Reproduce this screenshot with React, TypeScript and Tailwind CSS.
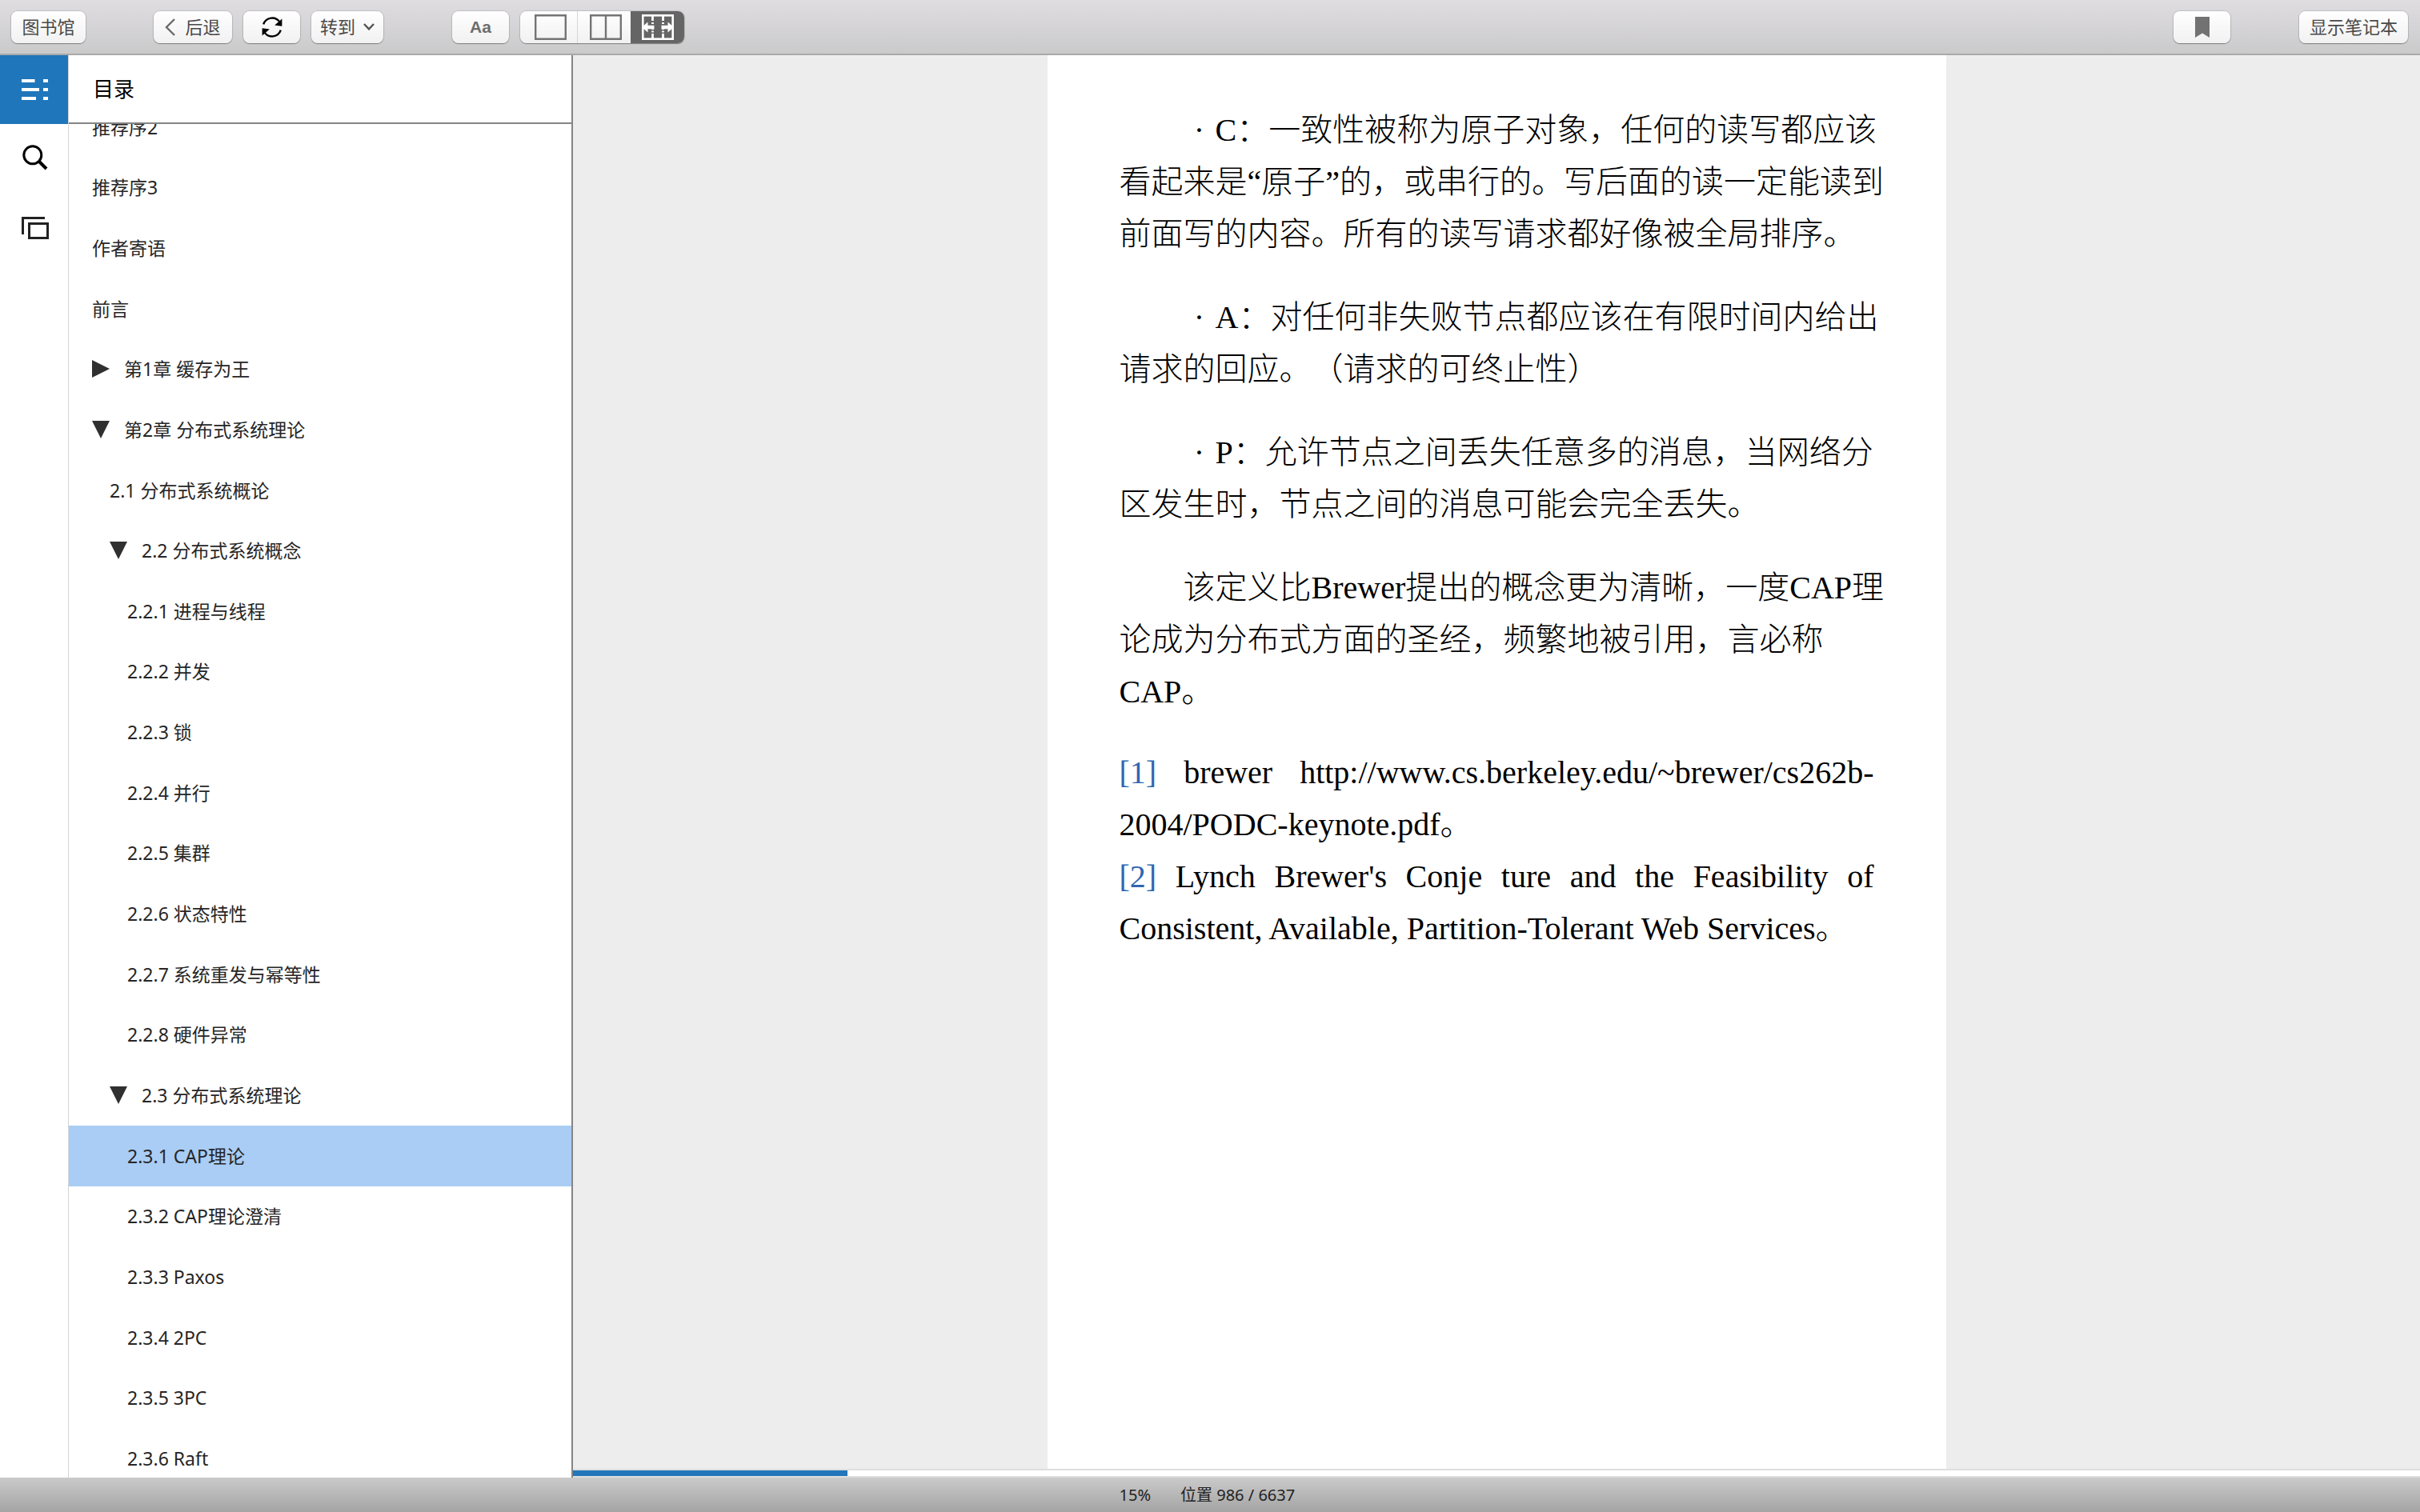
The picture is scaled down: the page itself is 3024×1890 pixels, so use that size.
import React, { useState } from 'react';

type TocItem = {
  title: string;
  level: 0 | 1 | 2;
  state?: 'open' | 'closed';
};

const TOC: TocItem[] = [
  { title: '推荐序2', level: 0 },
  { title: '推荐序3', level: 0 },
  { title: '作者寄语', level: 0 },
  { title: '前言', level: 0 },
  { title: '第1章 缓存为王', level: 0, state: 'closed' },
  { title: '第2章 分布式系统理论', level: 0, state: 'open' },
  { title: '2.1 分布式系统概论', level: 1 },
  { title: '2.2 分布式系统概念', level: 1, state: 'open' },
  { title: '2.2.1 进程与线程', level: 2 },
  { title: '2.2.2 并发', level: 2 },
  { title: '2.2.3 锁', level: 2 },
  { title: '2.2.4 并行', level: 2 },
  { title: '2.2.5 集群', level: 2 },
  { title: '2.2.6 状态特性', level: 2 },
  { title: '2.2.7 系统重发与幂等性', level: 2 },
  { title: '2.2.8 硬件异常', level: 2 },
  { title: '2.3 分布式系统理论', level: 1, state: 'open' },
  { title: '2.3.1 CAP理论', level: 2 },
  { title: '2.3.2 CAP理论澄清', level: 2 },
  { title: '2.3.3 Paxos', level: 2 },
  { title: '2.3.4 2PC', level: 2 },
  { title: '2.3.5 3PC', level: 2 },
  { title: '2.3.6 Raft', level: 2 },
];

const INDENT = ['pl-[29px]', 'pl-[51px]', 'pl-[73px]'];

const LOCATION = 986;
const TOTAL = 6637;

const BUTTON =
  'h-10 rounded-lg bg-gradient-to-b from-white to-[#f1f1f1] shadow-[0_0_1px_1px_rgba(0,0,0,0.12),0_1px_1px_rgba(0,0,0,0.3)] flex items-center justify-center text-[22px] text-[#4a4a4a]';

const RefreshIcon = () => (
  <svg width="28" height="28" viewBox="0 0 28 28" aria-hidden="true">
    <path d="M3.2 10.4A11.5 11.5 0 0 1 23.6 7.6" fill="none" stroke="#000" strokeWidth="2.4" />
    <path d="M24.8 17.6A11.5 11.5 0 0 1 4.4 20.4" fill="none" stroke="#000" strokeWidth="2.4" />
    <path d="M26.4 3.6V12.8L17.2 11.6Z" />
    <path d="M1.6 24.4V15.2L10.8 16.4Z" />
  </svg>
);

const SpreadIcon = () => (
  <svg width="40" height="32" viewBox="0 0 40 32" aria-hidden="true">
    <rect x="1.3" y="1.3" width="37.4" height="29.4" fill="none" stroke="#fff" strokeWidth="2.6" />
    <path d="M13.5 1V8M13.5 10V12M13.5 14V19M13.5 20.5V22.5M13.5 24V31" stroke="#fff" strokeWidth="2.8" />
    <path d="M26.5 1V8M26.5 10V12M26.5 14V19M26.5 20.5V22.5M26.5 24V31" stroke="#fff" strokeWidth="2.8" />
    <path d="M0 16L7.5 9.5V13.8H15.5V18.2H7.5V22.5Z" fill="#fff" />
    <path d="M40 16L32.5 9.5V13.8H24.5V18.2H32.5V22.5Z" fill="#fff" />
  </svg>
);

const Toolbar = () => (
  <header className="h-[69px] shrink-0 pl-3.5 pr-[15px] flex items-center border-b-2 border-[#aaa9aa] bg-gradient-to-b from-[#dfdde0] to-[#cbcacb]">
    <button className={`${BUTTON} w-[93px]`}>图书馆</button>
    <div className="ml-[85px] flex gap-3.5">
      <button className={`${BUTTON} w-[98px] gap-3`}>
        <svg width="13" height="22" viewBox="0 0 13 22" aria-hidden="true">
          <path d="M12 1L2 11L12 21" fill="none" stroke="#6a6a6a" strokeWidth="2.4" />
        </svg>
        后退
      </button>
      <button className={`${BUTTON} w-[71px]`} aria-label="刷新"><RefreshIcon /></button>
      <button className={`${BUTTON} w-[90px] gap-2.5`}>
        转到
        <svg width="14" height="9" viewBox="0 0 14 9" aria-hidden="true">
          <path d="M1 1L7 7.4L13 1" fill="none" stroke="#555" strokeWidth="2.4" />
        </svg>
      </button>
    </div>
    <div className="ml-[86px] flex gap-3.5">
      <button className={`${BUTTON} w-[71px] font-['Liberation_Sans',sans-serif]`}>
        <span className="text-[21px] font-bold text-[#6d6d6d]">Aa</span>
      </button>
      <div className={`${BUTTON} w-[205px] overflow-hidden`}>
        <button className="flex-1 h-full pl-1 flex items-center justify-center border-r border-[#d6d6d6]" aria-label="单列">
          <svg width="40" height="32" viewBox="0 0 40 32" aria-hidden="true">
            <path d="M1.2 1.2H38.8V30.8H1.2Z" fill="none" stroke="#747474" strokeWidth="2.4" />
          </svg>
        </button>
        <button className="w-[66px] h-full pl-1 flex items-center justify-center" aria-label="双列">
          <svg width="40" height="32" viewBox="0 0 40 32" aria-hidden="true">
            <path d="M1.2 1.2H38.8V30.8H1.2ZM20 1V31" fill="none" stroke="#747474" strokeWidth="2.4" />
          </svg>
        </button>
        <button className="flex-1 h-full flex items-center justify-center bg-[#666566]" aria-label="自动"><SpreadIcon /></button>
      </div>
    </div>
    <button className={`${BUTTON} w-[71px] ml-auto`} aria-label="书签">
      <svg width="18" height="26" viewBox="0 0 18 26" aria-hidden="true">
        <path d="M0 0H18V26L9 20.5L0 26Z" fill="#727272" />
      </svg>
    </button>
    <button className={`${BUTTON} w-[136px] ml-[86px]`}>显示笔记本</button>
  </header>
);

const Rail = () => (
  <nav className="w-[86px] shrink-0 flex flex-col border-r border-[#d5d5d5]">
    <button className="h-[86px] flex items-center justify-center bg-[#1f76ba] pl-0.5" aria-label="目录">
      <svg width="34" height="28" viewBox="0 0 34 28" aria-hidden="true">
        <path d="M0 3H16.5M0 14H22M0 25H18M27 3H33M27 14H33M27 25H33" stroke="#fff" strokeWidth="4" />
      </svg>
    </button>
    <button className="h-[84px] flex items-center justify-center pl-0.5" aria-label="搜索">
      <svg width="32" height="32" viewBox="0 0 32 32" aria-hidden="true">
        <circle cx="12.8" cy="12.8" r="11" fill="none" stroke="#000" strokeWidth="3" />
        <path d="M20 20L30 30" stroke="#000" strokeWidth="4" />
      </svg>
    </button>
    <button className="h-[92px] flex items-center justify-center pl-0.5" aria-label="生词卡">
      <svg width="34" height="28" viewBox="0 0 34 28" aria-hidden="true">
        <path d="M1.5 22V1.5H29" fill="none" stroke="#222" strokeWidth="3" />
        <rect x="9.5" y="8.5" width="23" height="18" fill="none" stroke="#222" strokeWidth="3" />
      </svg>
    </button>
  </nav>
);

const Contents = () => {
  const [current, setCurrent] = useState('2.3.1 CAP理论');

  return (
    <aside className="w-[630px] shrink-0 flex flex-col border-r-2 border-[#858585] text-[#262626]">
      <h2 className="h-[86px] shrink-0 pl-[30px] flex items-center border-b-2 border-[#858585] text-[26px] text-black">
        目录
      </h2>
      <div className="flex-1 min-h-0 overflow-hidden flex">
        {/* scrolled so the first and last rows are cut */}
        <ul className="flex-1 flex flex-col -mt-[34px] -mb-3.5">
          {TOC.map(item => (
            <li key={item.title} className="flex-1 min-h-0">
              <button
                onClick={() => setCurrent(item.title)}
                className={`w-full h-full flex items-center gap-[18px] text-left text-[23px] ${INDENT[item.level]} ${
                  item.title === current ? 'bg-[#a9cdf5]' : ''
                }`}
              >
                {item.state && (
                  <svg width="22" height="22" viewBox="0 0 22 22" fill="#303030" aria-hidden="true">
                    <path d={item.state === 'open' ? 'M0 0H22L11 22Z' : 'M0 0L22 11L0 22Z'} />
                  </svg>
                )}
                {item.title}
              </button>
            </li>
          ))}
        </ul>
      </div>
    </aside>
  );
};

const Bullet = ({ lines }: { lines: string[] }) => (
  <p className="mb-[39px]">
    <span className="block pl-20 whitespace-nowrap">
      <span className="inline-block w-10 text-center">·</span>
      {lines[0]}
    </span>
    {lines.slice(1).map(line => (
      <span key={line} className="block whitespace-nowrap">{line}</span>
    ))}
  </p>
);

const Page = () => (
  <article
    lang="zh-CN"
    className="w-[1123px] bg-white px-[90px] pt-[61px] text-[40px] leading-[65px] font-light text-black font-['Liberation_Serif','Noto_Sans_CJK_SC',serif] [text-spacing-trim:space-all]"
  >
    <Bullet
      lines={[
        'C：一致性被称为原子对象，任何的读写都应该',
        '看起来是“原子”的，或串行的。写后面的读一定能读到',
        '前面写的内容。所有的读写请求都好像被全局排序。',
      ]}
    />
    <Bullet lines={['A：对任何非失败节点都应该在有限时间内给出', '请求的回应。（请求的可终止性）']} />
    <Bullet lines={['P：允许节点之间丢失任意多的消息，当网络分', '区发生时，节点之间的消息可能会完全丢失。']} />
    <p className="mb-9 whitespace-nowrap">
      <span className="block pl-20">该定义比Brewer提出的概念更为清晰，一度CAP理</span>
      <span className="block">论成为分布式方面的圣经，频繁地被引用，言必称</span>
      <span className="block">CAP。</span>
    </p>
    <p>
      <span className="block [text-align-last:justify]">
        <a href="#ref1" className="text-[#2f67b1]">[1]</a> brewer http://www.cs.berkeley.edu/~brewer/cs262b-
      </span>
      <span className="block">2004/PODC-keynote.pdf。</span>
    </p>
    <p>
      <span className="block [text-align-last:justify]">
        <a href="#ref2" className="text-[#2f67b1]">[2]</a> Lynch Brewer's Conje ture and the Feasibility of
      </span>
      <span className="block whitespace-nowrap">Consistent, Available, Partition-Tolerant Web Services。</span>
    </p>
  </article>
);

const App = () => (
  <div className="h-screen flex flex-col overflow-hidden bg-white font-['Noto_Sans','Noto_Sans_CJK_SC',sans-serif]">
    <Toolbar />
    <div className="flex-1 min-h-0 flex">
      <Rail />
      <Contents />
      <main className="flex-1 min-w-0 flex flex-col bg-[#ededed]">
        <div className="flex-1 min-h-0 flex justify-center">
          <Page />
        </div>
        <div className="h-[11px] shrink-0 border-y-2 border-[#dedede] bg-white">
          <div className="h-full bg-[#2376b9]" style={{ width: `${(LOCATION / TOTAL) * 100}%` }} />
        </div>
      </main>
    </div>
    <footer className="h-[43px] shrink-0 pl-[716px] flex justify-center bg-gradient-to-b from-[#cacaca] to-[#a4a4a4] text-xl text-[#222]">
      <div className="w-[1123px] px-[90px] flex items-center gap-[37px]">
        <span>{Math.round((LOCATION / TOTAL) * 100)}%</span>
        <span>位置 {LOCATION} / {TOTAL}</span>
      </div>
    </footer>
  </div>
);

export default App;
